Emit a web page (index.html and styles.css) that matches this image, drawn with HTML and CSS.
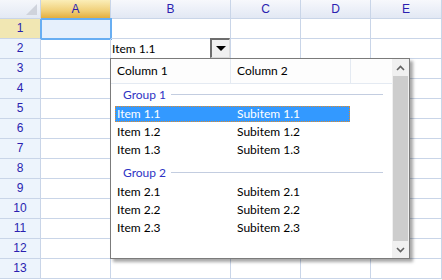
FILE: index.html
```html
<!DOCTYPE html>
<html lang="en">
<head>
  <meta charset="UTF-8">
  <title>Sheet</title>
  <link rel="stylesheet" href="styles.css">
</head>
<body>
  <div class="wrap">
    <div class="sheet">
      <div class="corner"><span class="corner-tri"></span></div>
      <div class="colhead active">A</div>
      <div class="colhead">B</div>
      <div class="colhead">C</div>
      <div class="colhead">D</div>
      <div class="colhead">E</div>

      <div class="rowhead active">1</div>
      <div class="cell selected"></div><div class="cell"></div><div class="cell"></div><div class="cell"></div><div class="cell"></div>

      <div class="rowhead">2</div>
      <div class="cell"></div>
      <div class="cell combo">
        <span class="combo-text">Item 1.1</span>
        <span class="combo-btn"><span class="tri-down"></span></span>
      </div>
      <div class="cell"></div><div class="cell"></div><div class="cell"></div>

      <div class="rowhead">3</div><div class="cell"></div><div class="cell"></div><div class="cell"></div><div class="cell"></div><div class="cell"></div>
      <div class="rowhead">4</div><div class="cell"></div><div class="cell"></div><div class="cell"></div><div class="cell"></div><div class="cell"></div>
      <div class="rowhead">5</div><div class="cell"></div><div class="cell"></div><div class="cell"></div><div class="cell"></div><div class="cell"></div>
      <div class="rowhead">6</div><div class="cell"></div><div class="cell"></div><div class="cell"></div><div class="cell"></div><div class="cell"></div>
      <div class="rowhead">7</div><div class="cell"></div><div class="cell"></div><div class="cell"></div><div class="cell"></div><div class="cell"></div>
      <div class="rowhead">8</div><div class="cell"></div><div class="cell"></div><div class="cell"></div><div class="cell"></div><div class="cell"></div>
      <div class="rowhead">9</div><div class="cell"></div><div class="cell"></div><div class="cell"></div><div class="cell"></div><div class="cell"></div>
      <div class="rowhead">10</div><div class="cell"></div><div class="cell"></div><div class="cell"></div><div class="cell"></div><div class="cell"></div>
      <div class="rowhead">11</div><div class="cell"></div><div class="cell"></div><div class="cell"></div><div class="cell"></div><div class="cell"></div>
      <div class="rowhead">12</div><div class="cell"></div><div class="cell"></div><div class="cell"></div><div class="cell"></div><div class="cell"></div>
      <div class="rowhead">13</div><div class="cell"></div><div class="cell"></div><div class="cell"></div><div class="cell"></div><div class="cell"></div>
    </div>

    <!-- dropdown list of the B2 combo -->
    <div class="popup">
      <div class="list">
        <div class="list-head">
          <div class="hcol">Column 1</div>
          <div class="hcol">Column 2</div>
          <div class="hcol rest"></div>
        </div>

        <div class="group first"><span>Group 1</span><span class="group-line"></span></div>
        <div class="item current"><span class="c1">Item 1.1</span><span class="c2">Subitem 1.1</span></div>
        <div class="item"><span class="c1">Item 1.2</span><span class="c2">Subitem 1.2</span></div>
        <div class="item"><span class="c1">Item 1.3</span><span class="c2">Subitem 1.3</span></div>

        <div class="group"><span>Group 2</span><span class="group-line"></span></div>
        <div class="item"><span class="c1">Item 2.1</span><span class="c2">Subitem 2.1</span></div>
        <div class="item"><span class="c1">Item 2.2</span><span class="c2">Subitem 2.2</span></div>
        <div class="item"><span class="c1">Item 2.3</span><span class="c2">Subitem 2.3</span></div>
      </div>
      <div class="scrollbar">
        <div class="arrow">
          <svg width="9" height="6" viewBox="0 0 9 6"><path d="M1 5 L4.5 1.5 L8 5" fill="none" stroke="#606060" stroke-width="1.6"/></svg>
        </div>
        <div class="thumb"></div>
        <div class="arrow">
          <svg width="9" height="6" viewBox="0 0 9 6"><path d="M1 1 L4.5 4.5 L8 1" fill="none" stroke="#606060" stroke-width="1.6"/></svg>
        </div>
      </div>
    </div>
  </div>
</body>
</html>
```

FILE: styles.css
```css
body {
  margin: 0;
  background: #ffffff;
  font-family: "Liberation Sans", Arial, sans-serif;
}

.wrap {
  position: relative;
  width: 442px;
  height: 280px;
  overflow: hidden;
}

.sheet {
  display: grid;
  grid-template-columns: 41px 70px 120px 70px 70px 71px;
  grid-template-rows: 19px repeat(13, 20px);
}

.sheet > div {
  box-sizing: border-box;
  border-right: 1px solid #c9d5e8;
  border-bottom: 1px solid #c9d5e8;
}

.corner {
  position: relative;
  background: linear-gradient(#f5f7fb, #e3e9f4);
}
.corner-tri {
  position: absolute;
  right: 3px;
  bottom: 3px;
  width: 0;
  height: 0;
  border-left: 11px solid transparent;
  border-bottom: 11px solid #cfd3dc;
}

.colhead {
  background: linear-gradient(#f7f8fc, #e2e8f4);
  color: #2a1fb0;
  font-size: 12px;
  text-align: center;
  line-height: 18px;
}
.colhead.active {
  background: linear-gradient(#fbeeb8, #f0cf78 60%, #e3ae3e);
  border-bottom: 1px solid #d19a2a;
}

.rowhead {
  background: #edf4fc;
  color: #2a1fb0;
  font-size: 12px;
  text-align: center;
  line-height: 19px;
}
.rowhead.active {
  background: #f1e7b3;
}

.cell.selected {
  background: #e6f0fc;
  outline: 2px solid #68aef2;
  outline-offset: -1px;
}

.combo {
  display: flex;
  align-items: stretch;
  justify-content: space-between;
}
.combo-text {
  font-family: "Lato", "Liberation Sans", sans-serif;
  font-size: 12px;
  line-height: 19px;
  padding-left: 1px;
  color: #000;
}
.combo-btn {
  box-sizing: border-box;
  width: 20px;
  margin-top: -1px;
  background: #f0f0f0;
  border-left: 2px solid #6d6d6d;
  border-top: 2px solid #6d6d6d;
  border-right: 1px solid #dcdcdc;
  border-bottom: 1px solid #dcdcdc;
  display: flex;
  align-items: center;
  justify-content: center;
}
.tri-down {
  width: 0;
  height: 0;
  border-left: 5px solid transparent;
  border-right: 5px solid transparent;
  border-top: 5px solid #000;
}

/* popup list */
.popup {
  position: absolute;
  left: 110px;
  top: 58px;
  width: 300px;
  height: 201px;
  box-sizing: border-box;
  border: 1px solid #7b7b7b;
  background: #ffffff;
  box-shadow: 3px 3px 3px rgba(0, 0, 0, 0.35);
  display: flex;
  font-family: "Lato", "Liberation Sans", sans-serif;
  font-size: 12px;
  color: #000;
}

.list {
  flex: 1 1 auto;
  min-width: 0;
}

.list-head {
  display: flex;
  height: 25px;
  box-sizing: border-box;
  border-bottom: 1px solid #e4eaf2;
  background: #fdfdfd;
}
.hcol {
  width: 120px;
  box-sizing: border-box;
  padding-left: 6px;
  line-height: 24px;
  border-right: 1px solid #e4eaf2;
}
.hcol.rest {
  flex: 1;
  border-right: none;
}

.group {
  display: flex;
  align-items: center;
  height: 20px;
  margin-top: 4px;
  padding-left: 12px;
  padding-right: 9px;
  color: #2f33c4;
}
.group.first {
  margin-top: 0;
}
.group-line {
  flex: 1;
  height: 1px;
  margin-left: 5px;
  background: #c3cde0;
}

.item {
  display: flex;
  height: 16px;
  margin: 2px 0 0 4px;
  width: 235px;
  box-sizing: border-box;
  line-height: 15px;
}
.item .c1 {
  width: 120px;
  padding-left: 2px;
}
.item.current {
  background: #3399ff;
  color: #ffffff;
  outline: 1px dotted #e08a2a;
  outline-offset: -1px;
}

.scrollbar {
  flex: 0 0 17px;
  width: 17px;
  background: #f0f0f0;
  display: flex;
  flex-direction: column;
}
.arrow {
  flex: 0 0 17px;
  display: flex;
  align-items: center;
  justify-content: center;
}
.thumb {
  flex: 1;
  margin: 0 1px;
  background: #cdcdcd;
}
```
